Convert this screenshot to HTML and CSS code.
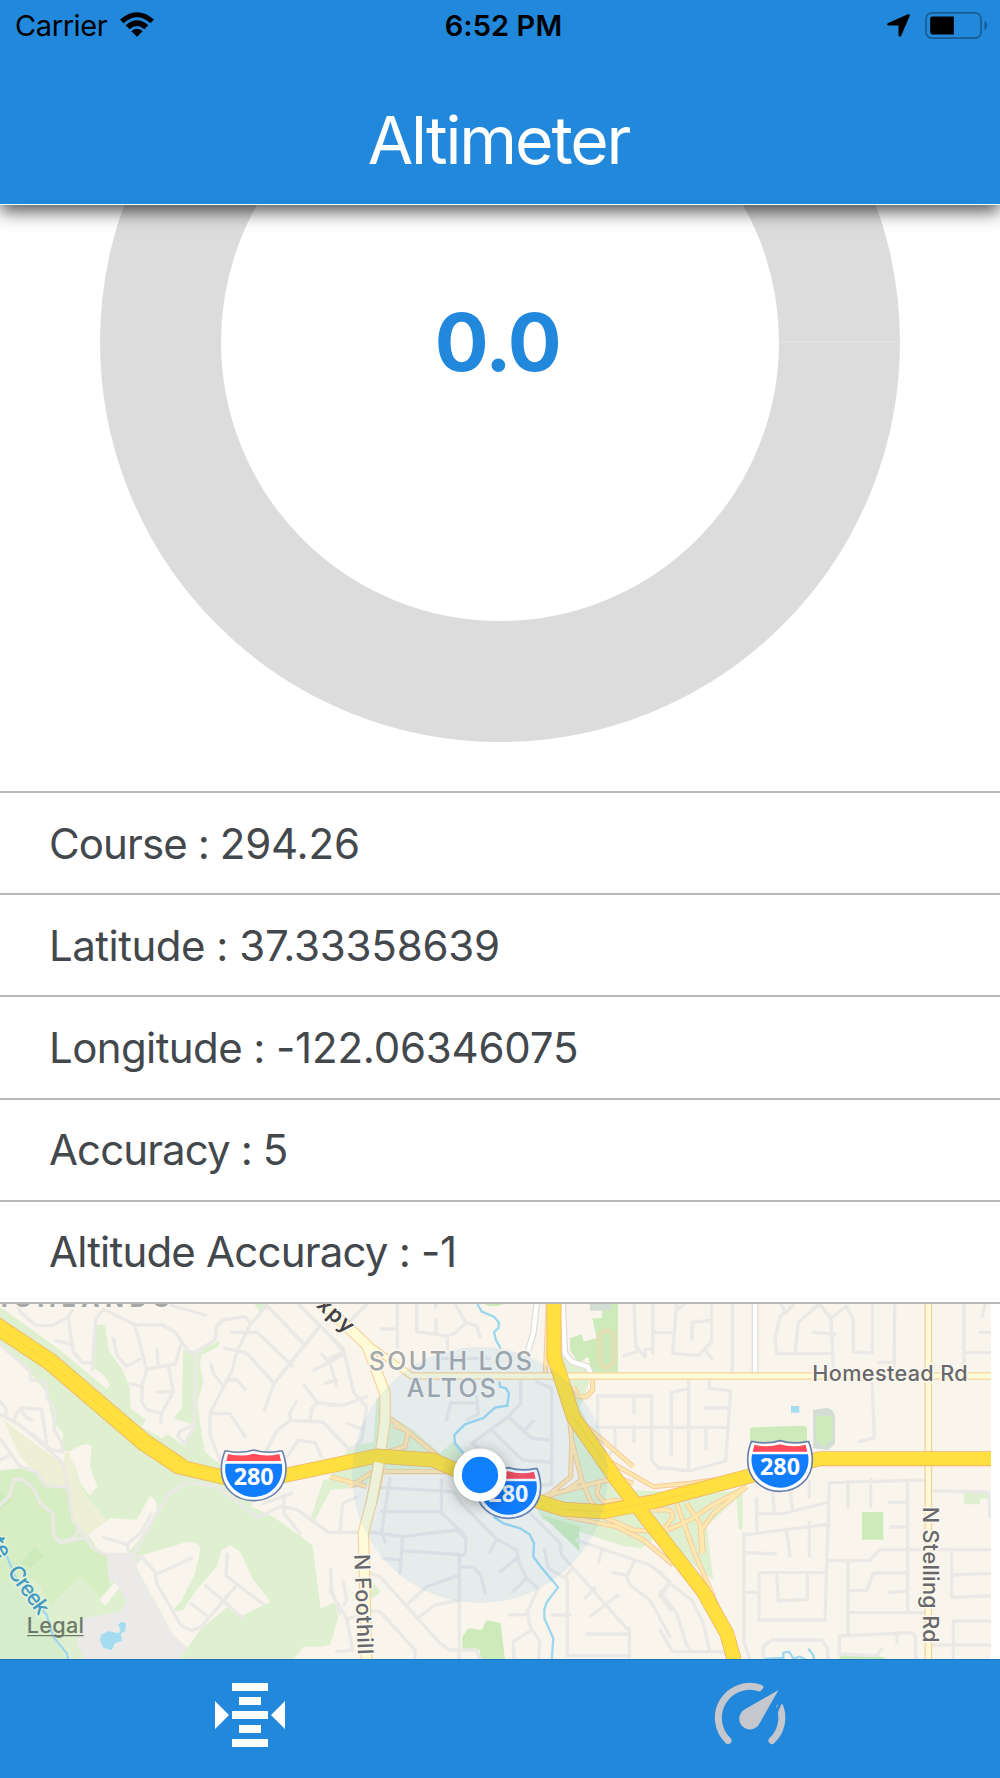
FILE: index.html
```html
<!DOCTYPE html>
<html lang="en">
<head>
  <meta charset="UTF-8" />
  <title>Altimeter</title>
  <link rel="stylesheet" href="styles.css">
</head>
<body>
  <div class="app">
    <header class="header">
      <div class="status-bar">
        <div class="status-left">
          <span class="carrier">Carrier</span>
          <svg class="wifi" viewBox="0 0 102 74">
            <path d="M0 22 Q51 -22 102 22 L91 33 Q51 -2 11 33Z" />
            <path d="M17 39 Q51 9 85 39 L73 51 Q51 32 29 51Z" />
            <path d="M34 57 Q51 43 68 57 L51 74Z" />
          </svg>
        </div>
        <span class="time">6:52 PM</span>
        <div class="status-right">
          <svg class="location" viewBox="0 0 68 68">
            <path d="M62 1 Q69 -1 67 6 L42 64 Q39 69 35 66 Q34 65 34 62 V34 H5 Q-1 33 1 29 Q2 27 5 26Z" />
          </svg>
          <svg class="battery" viewBox="0 0 190 82">
            <rect class="battery-case" x="2.500" y="2.500" width="167" height="77" rx="18" />
            <path class="battery-tip" d="M180 26 Q188 31 188 41 Q188 51 180 56Z" />
            <path d="M22 14 H87 V68 H22 Q15 68 15 61 V21 Q15 14 22 14Z" />
          </svg>
        </div>
      </div>
      <h1 class="title">Altimeter</h1>
    </header>

    <main class="content">
      <section class="gauge">
        <svg class="gauge-ring" viewBox="0 205 1000 586">
          <circle class="ring" cx="500" cy="342" r="339.500" />
          <path class="ring-seam" d="M779 342 H900" />
        </svg>
        <span class="gauge-value">0.0</span>
      </section>

      <ul class="readings">
        <li><span class="name course">Course : </span><span class="value">294.26</span></li>
        <li><span class="name latitude">Latitude : </span><span class="value">37.33358639</span></li>
        <li><span class="name longitude">Longitude : </span><span class="value">-122.06346075</span></li>
        <li><span class="name accuracy">Accuracy : </span><span class="value">5</span></li>
        <li><span class="name altitude">Altitude Accuracy : </span><span class="value">-1</span></li>
      </ul>

      <section class="map">
        <svg class="map-canvas" viewBox="0 42 2973 1068">
          <defs>
            <g id="shield">
              <path class="shield-back" d="M-80 -73 Q-40 -64 0 -76 Q40 -64 80 -73 L86 -73 Q97 -45 97 -18 C97 40 52 76 0 76 C-52 76 -97 40 -97 -18 Q-97 -45 -86 -73Z" />
              <path class="shield-red" d="M-77 -64 Q-38 -54 0 -65 Q38 -54 77 -64 L82 -43 H-82Z" />
              <path class="shield-blue" d="M-84 -35 H84 Q88 -12 82 5 C70 43 34 65 0 65 C-34 65 -70 43 -82 5 Q-88 -12 -84 -35Z" />
              <text class="shield-text" x="0" y="28" textLength="120" lengthAdjust="spacingAndGlyphs">280</text>
            </g>
          </defs>

          <!-- parks and open land, west side -->
          <path class="green" d="M0 50 L180 180 L320 297 L330 285 Q320 255 274 230 L290 104 H316 L326 180 L368 240 L388 290 L392 355 L438 390 L425 410 L485 445 L505 433 L545 463 L555 470 L583 405 L520 385 L545 355 L550 180 L570 186 L645 160 L660 150 L655 170 L605 195 L600 225 L610 280 L592 335 L600 400 L615 485 L650 515 L760 560 L755 650 L820 680 L937 765 L962 955 L1010 935 V1000 L990 1065 L960 1070 H910 L880 1110 H625 Q650 1065 730 1023 Q780 1045 800 1110 H0 V540 L60 535 L190 590 L215 485 L180 480 L190 430 L160 400 L135 300 L90 250 L0 160Z" />
          <path class="khaki" d="M10 390 L130 480 L190 520 L195 485 L212 485 L232 570 L260 620 L320 690 L262 740 L220 680 L205 590 L135 580 L60 500Z" />
          <path class="land" d="M205 487 Q250 455 275 467 L270 530 L292 590 L270 617 L240 580 L230 540Z" />
          <path class="land" d="M265 735 L330 685 L410 690 L450 617 Q475 630 470 660 L430 730 L385 790 L300 790Z" />
          <path class="park" d="M0 545 L70 535 L110 550 L140 585 L205 590 L220 690 L260 750 L320 796 L328 890 L300 920 L240 860 L150 945 L110 870 L70 868 L0 980Z" />
          <path class="park-dark" d="M0 605 L36 630 L5 655 H0Z M62 820 L105 770 L131 798 L90 835Z" />
          <path class="creek-land" d="M0 880 L60 870 L200 1110 H0Z" />
          <path class="land" d="M300 930 L345 875 L360 892 L315 948Z" />
          <path class="grey" d="M320 796 L395 798 L420 820 L408 835 L520 1035 L563 1073 L535 1110 H255 L230 1060 L250 985 L360 965 L380 935 L345 875 H328Z" />
          <path class="land" d="M408 830 L430 795 L560 756 Q605 755 600 785 L585 850 L545 930 L515 965 L550 960 L585 905 L650 830 L665 780 L690 765 L720 785 L760 870 L812 935 L720 980 L690 945 L640 985 L600 1020 L563 1073 L520 1035Z" />
          <path class="water" d="M303 1035 L325 1023 L355 1030 L362 1020 L354 1005 L363 995 L378 1000 L376 1022 L362 1032 L367 1052 L345 1060 L335 1080 L310 1073 L300 1050Z" />
          <path class="green" d="M970 570 L1010 565 L945 690 L932 685Z M763 42 H800 L780 65Z" />

          <!-- green patches around the interchanges -->
          <g transform="translate(990 0)">
            <path class="green" d="M60 470 L130 455 L140 320 L185 380 L250 420 L330 490 L375 450 L400 490 L370 545 H140 L105 590 L0 600 V560Z" />
            <path class="green" d="M690 190 L785 250 L760 330 L750 350 L790 440 L840 530 L890 600 L1140 610 L1235 600 L1225 620 L1130 710 L1150 870 L980 740 L935 775 L880 768 L640 690 L610 640 L720 590 L750 560 L700 330Z" />
            <path class="park-dark" d="M787 85 L815 85 L818 42 H864 V248 L785 248 L775 200 L745 220 L720 180 V145 L755 133 L760 155 L800 145Z M397 1040 L415 1015 L455 1020 L470 990 L512 1000 L525 1110 H450 V1080 H397Z M635 675 L748 710 V783Z M465 42 H520 L505 48 H475Z" />
            <path class="green" d="M125 870 L152 905 L120 930Z M0 940 L18 940 L25 990 L0 1005Z M0 1010 L10 1040 L0 1050Z" />
            <rect class="stadium-lot" x="780" y="42" width="64" height="20" />
            <rect class="track" x="808" y="122" width="44" height="110" rx="22" />
          </g>

          <g transform="translate(1980 0)">
            <path class="park-dark" d="M270 420 Q270 412 282 412 L430 407 Q441 407 441 417 V470 H270Z M606 666 H670 V749 H606Z M539 1095 L640 1092 L690 1110 H539Z" />
            <path class="stadium-lot" d="M459 360 L500 353 Q525 358 525 385 V460 L505 480 L460 475Z" />
            <path class="park-dark" d="M468 377 H517 V445 L493 470 L468 450Z" />
            <path class="green" d="M912 608 H988 V625 L960 627 V643 H912Z M228 610 H248 V718 H236Z" />
            <rect class="water" x="393" y="348" width="25" height="20" />
          </g>

          <!-- local streets -->
          <g class="street">
            <path d="M52 48 L65 70 L108 106 L155 107 L205 82 L217 60 M205 82 L220 185 L247 218 L278 217 L288 85 L310 58 M277 240 V217 M168 153 L219 163" />
            <path d="M315 60 L405 105 L485 104 L525 125 L545 155 L567 186 H588 L583 407 L555 463 L534 438 L540 423 L583 405 M588 186 L645 150 L650 108 L668 90 L735 80 L752 100 M545 155 L526 222 L440 238 L405 105 M340 146 L352 200 L380 228 L420 208 M471 178 L475 230 M505 230 L520 305 L485 370 L440 358 L425 335 L427 285 L440 238 M390 280 L425 290 M473 307 L518 304 M485 370 L482 398 M510 45 L616 75" />
            <path d="M800 46 L750 105 L710 185 L697 240 L630 370 V435 L660 510 M695 127 H772 L877 228 M674 174 L741 190 L822 280 L793 361 M634 225 L640 250 L668 285 M680 270 H710 L736 298 M630 371 H690 L735 440 M800 46 L917 168 M895 42 L960 108 L822 280 M960 108 L1030 175 M965 193 L990 220 L1010 287 M942 240 L1030 195 M912 284 L952 338 L1020 347 M952 338 L935 355 L930 390 M888 336 L868 372 L875 391 L968 396 L1020 447 M870 391 L830 423 L795 490 M862 500 L895 450 L945 458 L965 500 M975 280 L1010 270" />
            <path d="M0 165 L88 240 L93 270 L128 272 L140 285 V320 L163 360 V420 L190 468 L188 485 L155 480 L95 430 M0 372 L60 405 L180 510 L192 530 L205 600 L220 690 L275 770 L310 792 L385 795 M42 395 L50 370 L65 353 L125 358 L140 460 M60 358 L82 385 L95 390 M0 335 L18 355 V375 M0 445 L60 530 L108 545 L138 587 L208 592 M0 510 L35 492" />
            <path d="M0 645 L30 615 L40 570 L65 567 L104 600 L120 640 L158 670 L162 738 L180 758 L220 745 L240 715 M180 758 L255 743 M310 742 L380 763 L390 795 M385 760 L425 725 L453 672 M402 790 L503 615 L562 577 L648 588 L773 683 L840 650 L890 658 L985 727 H1020 M790 640 L875 610 M852 615 V670 L900 730 M400 795 L430 805 L465 845 L470 880 L542 1005 L575 1022 L605 1010 L712 883 M470 852 L575 805 M682 793 L678 857 L790 943 M617 887 L727 982 M573 940 L622 978 M992 840 L994 900 L1020 970" />
          </g>
          <g class="street" transform="translate(990 0)">
            <path d="M0 140 L42 185 L72 310 L110 350 L95 450 L70 475 M0 205 L42 185 M0 347 L42 345 L110 320 M52 400 L102 420 M0 420 L60 480 M60 95 L110 42 M152 117 H202 M202 42 V175 M260 42 V125 L350 138 L375 130 L408 98 L375 42 M408 98 L440 108 L450 140 M318 88 V130 M352 138 V175 M317 42 V52" />
            <path d="M350 388 L362 338 L442 340 M440 320 L445 372 L410 390 M572 275 V340 L535 380 L425 460 L460 485 M485 420 L577 510 L668 517 M535 380 L605 445 L668 450 M610 393 L580 425 M620 275 L665 295 V582 L640 585 M330 205 H480" />
            <path d="M142 592 L370 605 L395 640 L500 748 L560 780 L568 820 L590 865 L625 895 L592 965 L600 1010 L630 1055 L625 1110 M180 565 L155 725 L165 755 M334 570 V660 M155 665 H330 L400 730 M0 727 H130 L215 740 L380 720 L408 745 L405 795 L218 782 M218 740 L210 850 M158 805 L215 810 M388 795 V1110 M388 830 L430 832 L452 855 L465 908 M500 748 L480 787 M560 805 L510 845 M590 865 L548 905 M30 727 L38 640 L78 622 M120 850 L150 860 L330 1060 L360 1080 H440 L450 1110 M230 945 L290 890 L388 855 M262 985 L315 945 L388 930 M125 962 L150 965 L255 1080 V1110 M40 875 L50 930 L42 945 M0 900 L50 985 L68 1080 L20 1085 M55 985 L110 970" />
            <path d="M595 665 L690 760 L695 795 L890 1015 H898 V1110 M643 778 L655 835 L712 868 V1097 H900 M730 832 L705 860 M740 750 L915 810 L890 860 L900 885 L960 930 L1020 1040 M815 780 L807 815 M848 848 L890 855 M915 810 L960 825 L1020 875 L988 912 L1020 960 M865 915 L782 978 M795 893 L767 923 M770 1032 H895 M667 975 H720 M537 975 L595 973 M605 1020 L550 1055 L552 1110" />
            <path d="M912 42 L917 170 L945 200 V180 L970 173 M883 197 L920 185 M968 42 V190 M968 128 H1030 M803 318 H965 M803 318 V412 H1030 M912 318 V370 M912 410 V455 M855 415 V480 L840 490 M965 318 V510 L985 535 H1030" />
          </g>
          <g class="street" transform="translate(1980 0)">
            <path d="M50 42 L38 190 L115 197 L155 155 V42 M155 90 L96 97 V147 M135 180 L155 205 M50 60 L72 42 M217 42 V250 M363 42 L375 65 L360 80 L345 145 L350 190 H520 M400 45 L375 70 M478 42 L415 97 L405 190 M478 42 L513 85 L520 235 M513 85 L560 48 L580 90 V185 L637 189 V42 M460 127 L525 132 M704 42 L703 230 M655 217 H703 M912 42 V250 M912 188 H1000 M960 127 H1000 M975 42 L967 78" />
            <path d="M0 412 H200 M34 493 V307 L86 295 M86 270 V540 M135 354 H208 M138 412 V478 M148 270 V295 L212 302 L197 513 L90 543 L0 533 M636 270 L643 443 L598 455 M290 625 V722 M290 670 H370 L503 637 M338 608 L343 668 M390 605 L397 657 M448 575 V622 M252 735 L508 702 M380 722 L390 797 M448 697 V797 M252 730 V1055 L270 1110 M252 787 L347 792 M257 907 H297 M297 848 H500 M297 848 V990 H495 L508 578 L797 570 M350 850 L355 933 L442 928 V850 M564 573 V652 M632 567 V650 M743 570 V968 M687 637 H743 M692 711 H743 M505 812 H628 L660 779 H1000 M564 812 V1038 M568 902 H620 L640 849 H743 M687 907 L743 903 M568 968 H797 M820 603 L985 606 L990 680 M875 780 V922 L1000 917 M875 855 L1000 850 M880 1110 V993 H1000 M820 1065 H1000 M538 1092 V1038 L755 1028 L767 1040 V1110 M711 1028 V1060 M538 1092 L650 1097 L665 1078 M310 1110 V1070 L335 1050 H485 L503 1075 V1110 M0 920 L30 880 L0 845 M30 880 L95 930 L130 1000 L150 1085 M0 1020 L38 1085 H190 L205 1110 M0 905 L50 970 L78 1060 L92 1085" />
          </g>

          <!-- streams -->
          <path class="stream" d="M1432 42 L1445 65 L1482 80 L1497 98 L1495 115 L1482 125 L1488 150 L1502 175 M1498 275 L1500 290 L1518 295 L1527 310 L1522 347 L1485 353 L1450 384 L1395 403 L1363 435 L1365 460 L1390 490 M1480 680 L1510 700 L1560 715 L1588 732 L1602 760 L1600 800 L1625 833 L1674 892 L1640 937 L1633 960 V985 L1660 1045 L1655 1110" />
          <path class="stream" d="M0 750 L50 870 L140 975 L160 1040 L200 1090 L205 1110 M2295 1107 L2350 1104 L2350 1088 L2367 1085 L2380 1105 L2400 1100 L2420 1110 M2425 1076 L2440 1095 L2442 1110" />

          <!-- connector roads -->
          <path class="white-edge" d="M1610 42 L1600 130 L1585 180 M1688 42 L1695 190 L1715 215 L1762 230 L1773 250 M2265 42 V255" />
          <path class="white-road" d="M1610 42 L1600 130 L1585 180 M1688 42 L1695 190 L1715 215 L1762 230 L1773 250 M2265 42 V255" />
          <g class="ramp-edge">
            <path id="ramps" d="M1636 250 L1645 42 M1170 385 L1225 425 L1350 530 M1180 405 L1225 425 L1215 470 L1150 490 M990 560 L1100 590 M1050 590 L1120 545 H1360 M1700 300 L1715 450 L1712 560 L1640 620 M1715 450 L1745 570 L1700 600 L1620 625 M1740 430 L1820 510 L1960 590 L2070 580 L2250 555 M1750 400 L1900 530 M1630 620 L1800 575 L1860 565 L1900 580 M1745 570 L1770 630 L1810 680 L1900 720 L1990 725 L2070 690 L2130 650 L2240 590 M1700 680 L1850 710 L1930 750 L2020 825 M1800 575 L1790 610 L1810 635 L1870 630 M1960 660 H2005 Q2020 665 2018 680 L1995 715 M2030 640 L2080 780 L2140 920 L2190 1050 M2060 640 L2100 700 L2105 790 M2240 590 L2140 670 L2105 720 L2110 790 M1720 290 L1735 320 L1760 320 L1778 300 V270" />
          </g>
          <use class="ramp" href="#ramps" />

          <!-- arterial roads -->
          <path class="arterial-edge wide" d="M970 42 L1100 165 L1155 310 V390 L1130 575 L1090 730 L1100 1110" />
          <path class="arterial-edge" d="M1100 160 L1190 225 L1235 258 H2973 M2785 42 V1110" />
          <path class="arterial wide" d="M970 42 L1100 165 L1155 310 V390 L1130 575 L1090 730 L1100 1110" />
          <path class="arterial" d="M1100 160 L1190 225 L1235 258 H2973 M2785 42 V1110" />

          <!-- freeways -->
          <path class="freeway-edge" d="M-20 102 L150 215 L430 460 L545 532 L680 564 L760 566 L860 555 L1130 498 L1300 510 L1480 590 L1690 658 L1810 665 L1960 635 L2260 555 L2460 506 H2973" />
          <path class="freeway-edge" d="M1662 42 V200 L1720 380 L1850 570 L1990 750 L2110 905 L2180 1030 L2203 1110" />
          <path class="freeway-edge west" d="M-20 102 L150 215 L430 455 L545 532" />
          <path class="freeway" d="M-20 102 L150 215 L430 460 L545 532 L680 564 L760 566 L860 555 L1130 498 L1300 510 L1480 590 L1690 658 L1810 665 L1960 635 L2260 555 L2460 506 H2973" />
          <path class="freeway" d="M1662 42 V200 L1720 380 L1850 570 L1990 750 L2110 905 L2180 1030 L2203 1110" />
          <path class="freeway west" d="M-20 102 L150 215 L430 455 L545 532" />
          <path class="median" d="M0 115 L130 205 L160 225 L240 300 L300 346 L430 460 M1720 380 L1850 570 M1690 658 L1810 665 L1960 635 L2080 607" />
          <path class="overpass-edge" d="M1136 520 L1114 640" />
          <path class="overpass" d="M1137 518 L1113 645" />

          <!-- labels -->
          <g class="label">
            <text class="area bold" x="-70" y="50" textLength="578">HIGHLANDS</text>
            <text class="area" x="1106" y="240" textLength="490">SOUTH LOS</text>
            <text class="area" x="1220" y="321" textLength="268">ALTOS</text>
            <text class="road" x="2437" y="274" textLength="466">Homestead Rd</text>
            <text class="road" transform="translate(2768 650) rotate(90)" textLength="408">N Stelling Rd</text>
            <text class="road" transform="translate(1063 793) rotate(88)" textLength="301">N Foothill</text>
            <text class="road expy" transform="translate(913 19) rotate(42)" textLength="170">Expy</text>
            <text class="creek" transform="translate(-30 757) rotate(61)">te</text>
            <text class="creek" transform="translate(20 846) rotate(54)" textLength="164">Creek</text>
          </g>
          <use href="#shield" x="761" y="556" />
          <use href="#shield" x="1525" y="609" />
          <use href="#shield" x="2340" y="528" />
          <text class="legal" x="80" y="1028" textLength="172">Legal</text>
          <path class="legal-line" d="M81 1037 H251" />

          <!-- current position -->
          <circle class="accuracy-area" cx="1440" cy="555" r="384" />
          <circle class="position" cx="1440" cy="555" r="67" />
        </svg>
      </section>
    </main>

    <nav class="tab-bar">
      <a class="tab active">
        <svg class="tab-icon" viewBox="0 0 72 66">
          <path d="M18 1 H54 V9 H18Z M25 15 H47 V23 H25Z M18 29 H54 V37 H18Z M25 43 H47 V51 H25Z M18 57 H54 V65 H18Z M1 19 L15 33 L1 47Z M71 19 L57 33 L71 47Z" />
        </svg>
      </a>
      <a class="tab">
        <svg class="tab-icon" viewBox="0 0 72 66">
          <path class="dial" d="M14 58.500 A31.500 31.500 0 0 1 46 6 M66 25 A31.500 31.500 0 0 1 58 58.500" />
          <path class="dial-cut" d="M54 3 L46 12 M62 31 L70 12" />
          <path d="M64.500 8 L45.500 41.500 A10.700 10.700 0 1 1 30.500 27.500Z" />
        </svg>
      </a>
    </nav>
  </div>
</body>
</html>
```

FILE: styles.css
```css
* {
  box-sizing: border-box;
}

body {
  margin: 0;
  font-family: Inter, "Liberation Sans", sans-serif;
  background: #fff;
}

.app {
  display: flex;
  flex-direction: column;
  width: 1000px;
  height: 1778px;
  overflow: hidden;
}

.header {
  position: relative;
  z-index: 1;
  height: 205px;
  background: #2188dc;
  border-bottom: 1px solid #fff;
  box-shadow: 0 6px 17px 0 rgba(0,0,0,0.7);
}

.status-bar {
  display: grid;
  grid-template-columns: 1fr auto 1fr;
  align-items: center;
  height: 50px;
  padding: 0 12px 0 15px;
}

.status-left, .status-right {
  display: flex;
  align-items: center;
}

.status-right {
  justify-content: flex-end;
  gap: 15px;
}

.carrier {
  font-size: 29px;
  letter-spacing: -0.4px;
}

.wifi {
  width: 34px;
  height: 25px;
  margin-left: 13px;
  margin-top: -2px;
}

.time {
  padding-left: 4px;
  font-size: 29px;
  font-weight: 600;
  letter-spacing: 0.1px;
}

.location {
  width: 23px;
  height: 23px;
}

.battery {
  width: 63px;
  height: 27px;
}

.battery-case {
  fill: none;
  stroke: #185b91;
  stroke-width: 5;
}

.battery-tip {
  fill: #185b91;
}

.title {
  margin: 50px 3px 0 0;
  font-size: 66px;
  font-weight: 400;
  line-height: 80px;
  letter-spacing: -2.1px;
  text-align: center;
  color: #fff;
}

.content {
  display: flex;
  flex-direction: column;
}

.gauge {
  display: grid;
  height: 586px;
}

.gauge-ring, .gauge-value {
  grid-area: 1 / 1;
}

.gauge-ring {
  width: 1000px;
  height: 586px;
}

.ring {
  fill: none;
  stroke: #dcdcdc;
  stroke-width: 121;
}

.ring-seam {
  stroke: #e2e2e2;
  stroke-width: 1.5;
}

.gauge-value {
  justify-self: center;
  margin: 89px 5px 0 0;
  font-size: 80px;
  font-weight: 650;
  line-height: 96px;
  letter-spacing: -1.5px;
  color: #2188dc;
}

.readings {
  margin: 0;
  padding: 0;
  list-style: none;
  border-top: 2px solid #b8b8b8;
}

.readings li {
  display: flex;
  align-items: center;
  height: 102.200px;
  padding-left: 49px;
  border-bottom: 2px solid #b8b8b8;
  font-size: 42px;
  color: #43484d;
}

.name {
  white-space: pre;
}

.value {
  letter-spacing: -0.2px;
}

.course { letter-spacing: -0.9px; }
.latitude { letter-spacing: -0.5px; }
.longitude { letter-spacing: -0.6px; }
.accuracy { letter-spacing: -0.9px; }
.altitude { letter-spacing: -0.8px; }

.map {
  height: 355px;
  overflow: hidden;
}

.map-canvas {
  display: block;
  width: 991px;
  height: 356px;
  background: #f9f5ec;
}

.green { fill: #dff0d0; }
.park { fill: #d7edc4; }
.park-dark { fill: #cdebba; }
.creek-land { fill: #d5edcb; }
.khaki { fill: #edf0d5; }
.land { fill: #f9f5ec; }
.grey { fill: #ebeae8; }
.water { fill: #a5dcf0; }
.stadium-lot { fill: #d4ddd3; }

.track {
  fill: #cdebba;
  stroke: #e2dfb3;
  stroke-width: 14;
}

.street {
  fill: none;
  stroke: #eae9e6;
  stroke-width: 10;
  stroke-linecap: round;
  stroke-linejoin: round;
}

.stream {
  fill: none;
  stroke: #9dd8f0;
  stroke-width: 7;
}

.white-edge, .white-road, .ramp, .ramp-edge,
.arterial, .arterial-edge, .freeway, .freeway-edge,
.median, .overpass, .overpass-edge {
  fill: none;
  stroke-linejoin: round;
}

.white-edge { stroke: #dddcd6; stroke-width: 20; }
.white-road { stroke: #fff; stroke-width: 13; }
.ramp-edge { stroke: #f5c79c; stroke-width: 15; }
.ramp { stroke: #ffe7ae; stroke-width: 10; }
.arterial-edge { stroke: #f8d39c; stroke-width: 23; }
.arterial { stroke: #fffbd8; stroke-width: 15; }
.arterial-edge.wide { stroke-width: 35; }
.arterial.wide { stroke-width: 28; }
.freeway-edge { stroke: #f2b568; stroke-width: 45; }
.freeway { stroke: #ffe03f; stroke-width: 40; }
.freeway-edge.west { stroke-width: 54; }
.freeway.west { stroke-width: 49; }
.median { stroke: #f8cc42; stroke-width: 2; }
.overpass-edge { stroke: #f2cf98; stroke-width: 35; }
.overpass { stroke: #fffbd8; stroke-width: 28; }

.label text {
  paint-order: stroke;
  stroke: #fbf8f1;
  stroke-width: 9;
  stroke-linejoin: round;
}

.label .area {
  fill: #a6a8a8;
  font-size: 75px;
  font-weight: 500;
}

.label .bold {
  font-weight: 700;
}

.label .road {
  fill: #68686a;
  font-size: 65px;
  font-weight: 450;
}

.label .expy {
  fill: #444;
  font-weight: 600;
}

.label .creek {
  fill: #4499c0;
  font-size: 65px;
  font-weight: 500;
  stroke: #e3f2dc;
}

.shield-back {
  fill: #fff;
  stroke: #6b80ad;
  stroke-width: 5;
}

.shield-red { fill: #ff4b5a; }
.shield-blue { fill: #127cff; }

.shield-text {
  fill: #fff;
  font-family: "Noto Sans", sans-serif;
  font-size: 69px;
  font-weight: 700;
  text-anchor: middle;
}

.legal {
  fill: #6f7a6b;
  font-size: 65px;
  font-weight: 500;
}

.legal-line {
  stroke: #6f7a6b;
  stroke-width: 4;
}

.accuracy-area {
  fill: #1080e0;
  fill-opacity: 0.08;
}

.position {
  fill: #1180ff;
  stroke: #fff;
  stroke-width: 25;
  filter: drop-shadow(0 8px 22px rgba(0,0,0,0.35));
}

.tab-bar {
  display: flex;
  flex: 1;
  background: #2188dc;
  border-top: 1px solid #1b73b9;
}

.tab {
  display: flex;
  flex: 1;
  justify-content: center;
  padding-top: 22px;
  color: #c5c7ce;
}

.tab.active {
  color: #fff;
}

.tab-icon {
  width: 72px;
  height: 66px;
  fill: currentColor;
}

.dial {
  fill: none;
  stroke: currentColor;
  stroke-width: 7;
  stroke-linecap: round;
}

.dial-cut {
  stroke: #2188dc;
  stroke-width: 3;
}
```
